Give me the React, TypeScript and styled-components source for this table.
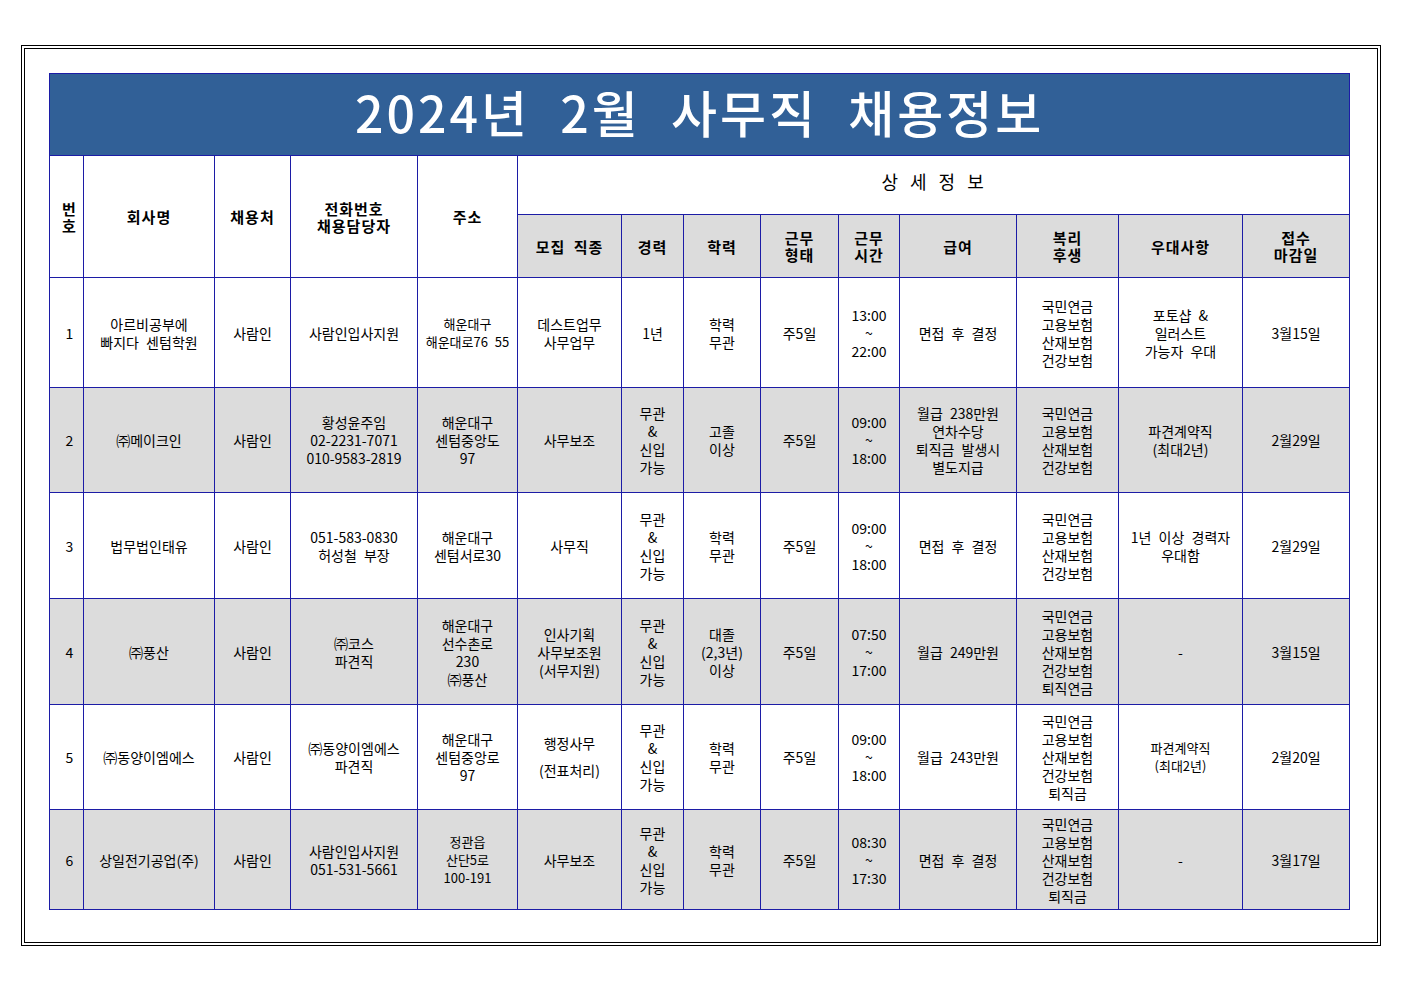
import React from "react";
import styled, { createGlobalStyle } from "styled-components";

const Global = createGlobalStyle`
  html, body { margin: 0; padding: 0; background: #ffffff; }
  body { font-family: "Noto Sans CJK KR", "Noto Sans", sans-serif; color: #000; }
`;

const LINE = "#1c1ca6";
const GRAY = "#dcdcdc";

const Frame = styled.div`
  box-sizing: border-box;
  margin: 45px 0 0 21px;
  width: 1360px;
  height: 901px;
  border: 4px double #000;
  padding: 24px 0 0 24px;
`;

const Table = styled.table`
  border-collapse: collapse;
  table-layout: fixed;
  width: 1300px;
`;

const TitleCell = styled.td`
  height: 73px;
  background: #316097;
  border: 1px solid ${LINE};
  color: #ffffff;
  text-align: center;
  vertical-align: middle;
  font-size: 50px;
  font-weight: 500;
  letter-spacing: 3px;
  word-spacing: 16px;
  padding: 0 0 8px 0;
  line-height: 1;
`;

const Th = styled.th<{ $gray?: boolean; $h?: number; $pl?: number }>`
  height: ${(p) => (p.$h ? `${p.$h}px` : "auto")};
  border: 1px solid ${LINE};
  background: ${(p) => (p.$gray ? GRAY : "#ffffff")};
  font-size: 15px;
  font-weight: 700;
  letter-spacing: 1px;
  word-spacing: 4px;
  line-height: 17px;
  text-align: center;
  vertical-align: middle;
  padding: 0 0 0 ${(p) => p.$pl ?? 0}px;
  white-space: pre-line;
`;

const GroupTh = styled.th`
  height: 50px;
  border: 1px solid ${LINE};
  background: #ffffff;
  font-size: 18px;
  font-weight: 400;
  letter-spacing: 2px;
  word-spacing: 4px;
  text-align: center;
  vertical-align: middle;
  padding: 0 0 8px 0;
`;

const Row = styled.tr<{ $h: number; $gray?: boolean }>`
  height: ${(p) => p.$h}px;
  background: ${(p) => (p.$gray ? GRAY : "#ffffff")};
`;

const Td = styled.td<{ $size?: number; $lh?: number; $pl?: number }>`
  border: 1px solid ${LINE};
  font-size: ${(p) => p.$size ?? 14}px;
  line-height: ${(p) => p.$lh ?? 18}px;
  word-spacing: 4px;
  text-align: center;
  vertical-align: middle;
  padding: 0 2px 0 ${(p) => p.$pl ?? 2}px;
  white-space: pre-line;
`;

type Cell = string | { t: string; size?: number; lh?: number };

const widths = [34, 131, 76, 127, 100, 104, 62, 77, 78, 61, 117, 102, 124, 107];

const W4 = "국민연금\n고용보험\n산재보험\n건강보험";
const MU = "무관\n&\n신입\n가능";

const rows: { h: number; gray?: boolean; cells: Cell[] }[] = [
  {
    h: 110,
    cells: [
      "1",
      "아르비공부에\n빠지다 센텀학원",
      "사람인",
      "사람인입사지원",
      { t: "해운대구\n해운대로76 55", size: 13 },
      "데스트업무\n사무업무",
      "1년",
      "학력\n무관",
      "주5일",
      "13:00\n~\n22:00",
      "면접 후 결정",
      W4,
      "포토샵 &\n일러스트\n가능자 우대",
      "3월15일",
    ],
  },
  {
    h: 105,
    gray: true,
    cells: [
      "2",
      "㈜메이크인",
      "사람인",
      "황성윤주임\n02-2231-7071\n010-9583-2819",
      "해운대구\n센텀중앙도\n97",
      "사무보조",
      MU,
      "고졸\n이상",
      "주5일",
      "09:00\n~\n18:00",
      "월급 238만원\n연차수당\n퇴직금 발생시\n별도지급",
      W4,
      "파견계약직\n(최대2년)",
      "2월29일",
    ],
  },
  {
    h: 106,
    cells: [
      "3",
      "법무법인태유",
      "사람인",
      "051-583-0830\n허성철 부장",
      "해운대구\n센텀서로30",
      "사무직",
      MU,
      "학력\n무관",
      "주5일",
      "09:00\n~\n18:00",
      "면접 후 결정",
      W4,
      "1년 이상 경력자\n우대함",
      "2월29일",
    ],
  },
  {
    h: 106,
    gray: true,
    cells: [
      "4",
      "㈜풍산",
      "사람인",
      "㈜코스\n파견직",
      "해운대구\n선수촌로\n230\n㈜풍산",
      "인사기획\n사무보조원\n(서무지원)",
      MU,
      "대졸\n(2,3년)\n이상",
      "주5일",
      "07:50\n~\n17:00",
      "월급 249만원",
      W4 + "\n퇴직연금",
      "-",
      "3월15일",
    ],
  },
  {
    h: 105,
    cells: [
      "5",
      "㈜동양이엠에스",
      "사람인",
      "㈜동양이엠에스\n파견직",
      "해운대구\n센텀중앙로\n97",
      { t: "행정사무\n(전표처리)", lh: 27 },
      MU,
      "학력\n무관",
      "주5일",
      "09:00\n~\n18:00",
      "월급 243만원",
      W4 + "\n퇴직금",
      { t: "파견계약직\n(최대2년)", size: 13 },
      "2월20일",
    ],
  },
  {
    h: 100,
    gray: true,
    cells: [
      "6",
      "상일전기공업(주)",
      "사람인",
      "사람인입사지원\n051-531-5661",
      { t: "정관읍\n산단5로\n100-191", size: 13 },
      "사무보조",
      MU,
      "학력\n무관",
      "주5일",
      "08:30\n~\n17:30",
      "면접 후 결정",
      W4 + "\n퇴직금",
      "-",
      "3월17일",
    ],
  },
];

const subHeads = [
  "모집 직종",
  "경력",
  "학력",
  "근무\n형태",
  "근무\n시간",
  "급여",
  "복리\n후생",
  "우대사항",
  "접수\n마감일",
];

export default function App() {
  return (
    <>
      <Global />
      <Frame>
        <Table>
          <colgroup>
            {widths.map((w, i) => (
              <col key={i} style={{ width: w }} />
            ))}
          </colgroup>
          <tbody>
            <tr>
              <TitleCell colSpan={14}>2024년 2월 사무직 채용정보</TitleCell>
            </tr>
            <tr>
              <Th rowSpan={2} $pl={6}>{"번\n호"}</Th>
              <Th rowSpan={2}>회사명</Th>
              <Th rowSpan={2}>채용처</Th>
              <Th rowSpan={2}>{"전화번호\n채용담당자"}</Th>
              <Th rowSpan={2}>주소</Th>
              <GroupTh colSpan={9}>상 세 정 보</GroupTh>
            </tr>
            <tr>
              {subHeads.map((s, i) => (
                <Th key={i} $gray $h={62}>
                  {s}
                </Th>
              ))}
            </tr>
            {rows.map((r, ri) => (
              <Row key={ri} $h={r.h} $gray={r.gray}>
                {r.cells.map((c, ci) =>
                  typeof c === "string" ? (
                    <Td key={ci} $pl={ci === 0 ? 8 : undefined}>
                      {c}
                    </Td>
                  ) : (
                    <Td key={ci} $size={c.size} $lh={c.lh}>
                      {c.t}
                    </Td>
                  )
                )}
              </Row>
            ))}
          </tbody>
        </Table>
      </Frame>
    </>
  );
}
